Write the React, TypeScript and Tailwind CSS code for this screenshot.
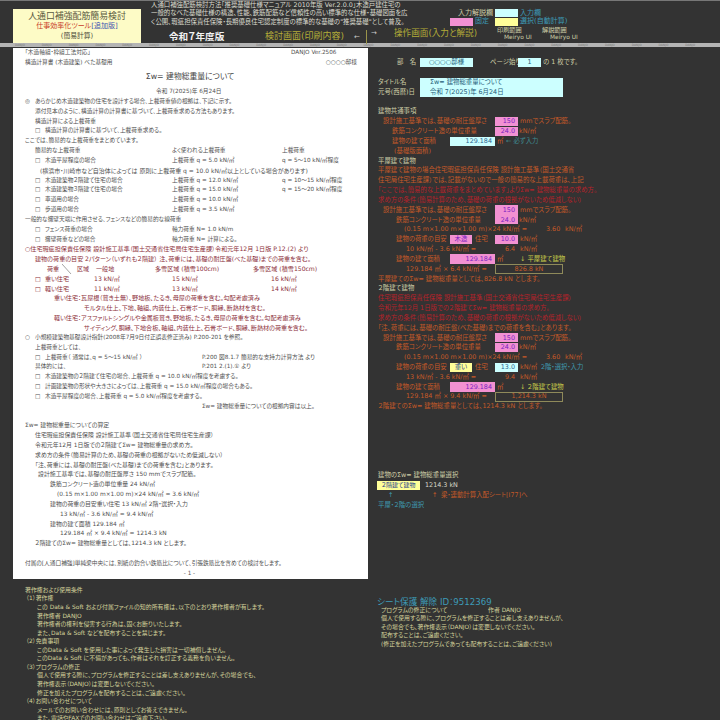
import React from "react";

const FONT = "[font-family:'DejaVu_Sans','Noto_Sans_CJK_JP',sans-serif] [font-feature-settings:'palt']";

function Row({ className = "", children }: { className?: string; children?: React.ReactNode }) {
  return <div className={"flex h-[9.83px] items-center whitespace-nowrap " + className}>{children}</div>;
}

function Check({ children }: { children?: React.ReactNode }) {
  return (
    <span className="flex">
      <span className="w-[10px]">□</span>
      <span>{children}</span>
    </span>
  );
}

function Load({ a, b, c }: { a: string; b: string; c?: string }) {
  return (
    <Row className="pl-[22px]">
      <span className="w-[137px]"><Check>{a}</Check></span>
      <span className="w-[110px]">{b}</span>
      {c && <span>{c}</span>}
    </Row>
  );
}

function Page() {
  return (
    <div className="w-[355px] ml-[13px] bg-white text-[#505050] text-[5.7px] leading-none">
      <Row className="pl-[12px]">
        <span className="w-[266px]">「木造軸組・枠組工法対応」</span>
        <span>DANJO Ver.2506</span>
      </Row>
      <Row className="pl-[12px] pr-[11px] justify-between">
        <span>構造計算書 (木造建築) べた基礎用</span>
        <span>○○○○邸様</span>
      </Row>
      <div className="flex h-[19.66px] items-center justify-center pr-[1px] text-[7.8px] text-[#444]">Σw= 建物総重量について</div>
      <Row className="pl-[143px]">令和 7(2025)年 6月24日</Row>
      <Row className="pl-[12px]"><span className="w-[10px]">◎</span>あらかじめ木造建築物の住宅を設計する場合、上載荷重値の根拠は、下記に示す。</Row>
      <Row className="pl-[22px]">添付見本のように、構造計算の計算書に基づいて、上載荷重求める方法もあります。</Row>
      <Row className="pl-[22px]">構造計算による上載荷重</Row>
      <Row className="pl-[22px]"><Check>構造計算の計算書に基づいて、上載荷重求める。</Check></Row>
      <Row className="pl-[12px]">ここでは、簡易的な上載荷重をまとめています。</Row>
      <Row className="pl-[22px]">
        <span className="w-[137px]">簡易的な上載荷重</span>
        <span className="w-[110px]">よく使われる上載荷重</span>
        <span>上載荷重</span>
      </Row>
      <Load a="木造平屋程度の場合" b="上載荷重 q =  5.0 kN/㎡" c="q =  5〜10 kN/㎡程度" />
      <Row className="pl-[27px] text-[6px]">(横浜市・川崎市など自治体によっては 原則に上載荷重 q = 10.0 kN/㎡以上としている場合があります)</Row>
      <Load a="木造建築物２階建て住宅の場合" b="上載荷重 q = 12.0 kN/㎡" c="q = 10〜15 kN/㎡程度" />
      <Load a="木造建築物３階建て住宅の場合" b="上載荷重 q = 15.0 kN/㎡" c="q = 15〜20 kN/㎡程度" />
      <Load a="車道用の場合" b="上載荷重 q = 10.0 kN/㎡" />
      <Load a="歩道用の場合" b="上載荷重 q =  3.5 kN/㎡" />
      <Row className="pl-[12px]">一般的な擁壁天端に作用させる、フェンスなどの簡易的な線荷重</Row>
      <Load a="フェンス荷重の場合" b="軸力荷重 N=  1.0 kN/m" />
      <Load a="擁壁荷重などの場合" b="軸力荷重 N=  計算による。" />

      <div className="text-[#8c2f3a] text-[6.1px]">
        <Row className="pl-[12px]">○住宅瑕疵担保責任保険 設計施工基準（国土交通省住宅局住宅生産課）令和元年12月 1日版 P.12.(2) より</Row>
        <Row className="pl-[22px]">
          <span className="w-[50px]">建物の荷重の目安</span>
          <span>2パターン（いずれも２階建） 注、荷重には、基礎の耐圧盤(べた基礎)までの荷重を含む。</span>
        </Row>
        <Row className="pl-[34px]">
          <span className="w-[15px]">荷重</span>
          <svg width="15" height="10" viewBox="0 0 15 10" className="shrink-0">
            <line x1="0" y1="0" x2="9" y2="10" stroke="#666" strokeWidth="0.6" />
          </svg>
          <span className="w-[19px]">区域</span>
          <span className="w-[59px]">一般地</span>
          <span className="w-[98px]">多雪区域 (積雪100cm)</span>
          <span>多雪区域 (積雪150cm)</span>
        </Row>
        <Row className="pl-[22px]">
          <span className="w-[59px]"><Check>重い住宅</Check></span>
          <span className="w-[78px]">13 kN/㎡</span>
          <span className="w-[99px]">15 kN/㎡</span>
          <span>16 kN/㎡</span>
        </Row>
        <Row className="pl-[22px]">
          <span className="w-[59px]"><Check>軽い住宅</Check></span>
          <span className="w-[78px]">11 kN/㎡</span>
          <span className="w-[99px]">13 kN/㎡</span>
          <span>14 kN/㎡</span>
        </Row>
        <Row className="pl-[41px]">重い住宅：瓦屋根（葺き土無）、野地板、たるき、母屋の荷重を含む。勾配考慮済み</Row>
        <Row className="pl-[71px]">モルタル仕上、下地、軸組、内装仕上、石膏ボード、胴縁、断熱材を含む。</Row>
        <Row className="pl-[41px]">軽い住宅：アスファルトシングルや金属板葺き、野地板、たるき、母屋の荷重を含む。勾配考慮済み</Row>
        <Row className="pl-[71px]">サイディング、胴縁、下地合板、軸組、内装仕上、石膏ボード、胴縁、断熱材の荷重を含む。</Row>
      </div>

      <Row className="pl-[12px]"><span className="w-[10px]">○</span>小規模建築物基礎設計指針(2008年7月9日付正誤表修正済み) P.200-201 を参照。</Row>
      <Row className="pl-[22px]">上載荷重としては、</Row>
      <Row className="pl-[22px]">
        <span className="w-[167px]"><Check>上載荷重（ 通常は、q = 5〜15 kN/㎡ ）</Check></span>
        <span>P.200 図8.1.7 簡易的な支持力計算方法 より</span>
      </Row>
      <Row className="pl-[22px]">
        <span className="w-[167px]">具体的には、</span>
        <span>P.201 2.(1).① より</span>
      </Row>
      <Row className="pl-[22px]"><Check>木造建築物の２階建て住宅の場合、上載荷重 q = 10.0 kN/㎡程度を考慮する。</Check></Row>
      <Row className="pl-[22px]"><Check>計画建築物の形状や大きさによっては、上載荷重 q = 15.0 kN/㎡程度の場合もある。</Check></Row>
      <Row className="pl-[22px]"><Check>木造平屋程度の場合、上載荷重 q = 5.0 kN/㎡程度を考慮する。</Check></Row>
      <Row className="pl-[189px]">Σw= 建物総重量についての根拠内容は以上。</Row>
      <Row />
      <div className="text-[5.9px]">
        <Row className="pl-[12px]">Σw= 建物総重量についての算定</Row>
        <Row className="pl-[22px]">住宅瑕疵担保責任保険 設計施工基準（国土交通省住宅局住宅生産課）</Row>
        <Row className="pl-[22px]">令和元年12月 1日版での２階建てΣw= 建物総重量の求め方。</Row>
        <Row className="pl-[22px]">求め方の条件（簡易計算のため、基礎の荷重の根拠がないため低減しない）</Row>
        <Row className="pl-[22px]">「注、荷重には、基礎の耐圧盤(べた基礎)までの荷重を含む」とあります。</Row>
        <Row className="pl-[25px]">設計施工基準では、基礎の耐圧盤厚さ 150 mmでスラブ配筋。</Row>
        <Row className="pl-[37px]">鉄筋コンクリート造の単位重量 24 kN/㎡</Row>
        <Row className="pl-[44px]">(0.15 m×1.00 m×1.00 m)×24 kN/㎡ = 3.6 kN/㎡</Row>
        <Row className="pl-[37px]">建物の荷重の目安重い住宅 13 kN/㎡  2階・選択・入力</Row>
        <Row className="pl-[47px]">13 kN/㎡ - 3.6 kN/㎡ = 9.4 kN/㎡</Row>
        <Row className="pl-[37px]">建物の建て面積 129.184 ㎡</Row>
        <Row className="pl-[47px]">129.184 ㎡ × 9.4 kN/㎡ = 1214.3 kN</Row>
        <Row className="pl-[22px]">２階建てのΣw= 建物総重量としては、1214.3 kN とします。</Row>
      </div>
      <Row />
      <Row className="pl-[12px]">付属の[人通口補強]単純梁中央には、別紙の釣合い鉄筋比について、引張鉄筋比を含めての検討をします。</Row>
      <Row className="justify-center pr-[2px]">- 1 -</Row>
    </div>
  );
}

function Copyright() {
  const h = "flex h-[8.57px] items-center whitespace-nowrap";
  return (
    <div className="mt-[8px] text-[#d6d49c] text-[5.9px] leading-none">
      <div className={h + " pl-[25px]"}>著作権および使用条件</div>
      <div className={h + " pl-[26px]"}>（1）著作権</div>
      <div className={h + " pl-[37px]"}>この Data &amp; Soft および付属ファイルの知的所有権は、以下のとおり著作権者が有します。</div>
      <div className={h + " pl-[37px]"}>著作権者  DANJO</div>
      <div className={h + " pl-[37px]"}>著作権者の権利を侵害する行為は、固くお断りいたします。</div>
      <div className={h + " pl-[37px]"}>また、Data &amp; Soft などを配布することを禁じます。</div>
      <div className={h + " pl-[26px]"}>（2）免責事項</div>
      <div className={h + " pl-[37px]"}>このData &amp; Soft を使用した事によって発生した損害は一切補償しません。</div>
      <div className={h + " pl-[37px]"}>このData &amp; Soft に不備があっても、作者はそれを訂正する義務を負いません。</div>
      <div className={h + " pl-[26px]"}>（3）プログラムの修正</div>
      <div className={h + " pl-[37px]"}>個人で使用する際に、プログラムを修正することは差し支えありませんが、その場合でも、</div>
      <div className={h + " pl-[37px]"}>著作権表示（DANJO）は変更しないでください。</div>
      <div className={h + " pl-[37px]"}>修正を加えたプログラムを配布することは、ご遠慮ください。</div>
      <div className={h + " pl-[26px]"}>（4）お問い合わせについて</div>
      <div className={h + " pl-[37px]"}>メールでのお問い合わせには、原則としてお答えできません。</div>
      <div className={h + " pl-[37px]"}>また、電話やFAXでのお問い合わせはご遠慮下さい。</div>
    </div>
  );
}

function Pink({ w, children, center }: { w: string; children: React.ReactNode; center?: boolean }) {
  return (
    <span className={"flex h-[9.3px] items-center bg-[#f291d2] text-[#7a22c0] text-[6.4px] shrink-0 " + w + (center ? " justify-center" : " justify-end pr-[3px]")}>
      {children}
    </span>
  );
}

function SlabRows() {
  return (
    <>
      <Row className="pl-[15px]">
        <span className="w-[112px]">設計施工基準では、基礎の耐圧盤厚さ</span>
        <Pink w="w-[23px]">150</Pink>
        <span className="ml-[2px]">mmでスラブ配筋。</span>
      </Row>
      <Row className="pl-[28px]">
        <span className="w-[99px]">鉄筋コンクリート造の単位重量</span>
        <Pink w="w-[23px]">24.0</Pink>
        <span className="ml-[1px]">kN/㎡</span>
      </Row>
      <Row className="pl-[36px]">
        <span className="w-[142px]">(0.15 m×1.00 m×1.00 m)×24 kN/㎡ =</span>
        <span className="w-[19px]">3.60</span>
        <span>kN/㎡</span>
      </Row>
    </>
  );
}

function Panel() {
  return (
    <div className="flex-1 text-[#c65a28] text-[6.4px] leading-none">
      <Row />
      <Row className="text-[#cfcfa8]">
        <span className="w-[52px] pl-[29px] shrink-0">部　名</span>
        <span className="flex h-[9.3px] w-[53px] items-center justify-center bg-[#ccffff] text-[#1f5c78]">○○○○邸様</span>
        <span className="w-[45px] pl-[17px]">ページ始り</span>
        <span className="flex h-[9.3px] w-[23px] items-center justify-center bg-[#ccffff] text-[#1f5c78]">1</span>
        <span className="ml-[2px]">の 1 枚です。</span>
      </Row>
      <Row />
      <Row className="text-[#cfcfa8]">
        <span className="w-[52px] pl-[10px] shrink-0">タイトル名</span>
        <span className="flex h-[9.3px] w-[143px] items-center bg-[#ccffff] pl-[10px] text-[#1f5c78]">Σw= 建物総重量について</span>
      </Row>
      <Row className="text-[#cfcfa8]">
        <span className="w-[52px] pl-[10px] shrink-0">元号(西暦)日</span>
        <span className="flex h-[9.3px] w-[143px] items-center bg-[#ccffff] pl-[10px] text-[#1f5c78]">令和 7(2025)年 6月24日</span>
      </Row>
      <Row />
      <Row className="pl-[10px] text-[#cfcfa8]">建物共通事項</Row>
      <Row className="pl-[15px]">
        <span className="w-[112px]">設計施工基準では、基礎の耐圧盤厚さ</span>
        <Pink w="w-[23px]">150</Pink>
        <span className="ml-[2px]">mmでスラブ配筋。</span>
      </Row>
      <Row className="pl-[24px]">
        <span className="w-[103px]">鉄筋コンクリート造の単位重量</span>
        <Pink w="w-[23px]">24.0</Pink>
        <span className="ml-[1px]">kN/㎡</span>
      </Row>
      <Row className="pl-[24px]">
        <span className="w-[58px]">建物の建て面積</span>
        <span className="flex h-[9.3px] w-[45px] items-center justify-end bg-[#ccffff] pr-[3px] text-[#2a6490]">129.184</span>
        <span className="ml-[2px] w-[9px]">㎡</span>
        <span className="text-[#3f8a90]">← 必ず入力</span>
      </Row>
      <Row className="pl-[26px]">(基礎版面積)</Row>
      <Row className="pl-[10px] text-[#cfcfa8]">平屋建て建物</Row>
      <Row className="pl-[10px]">平屋建て建物の場合住宅瑕疵担保責任保険 設計施工基準（国土交通省</Row>
      <Row className="pl-[10px]">住宅局住宅生産課）では、記載がないので一般の簡易的な上載荷重は、上記</Row>
      <Row className="pl-[10px] text-[#b8222a]">「ここでは、簡易的な上載荷重をまとめています」よりΣw= 建物総重量の求め方。</Row>
      <Row className="pl-[10px] text-[#b8222a]">求め方の条件（簡易計算のため、基礎の荷重の根拠がないため低減しない）</Row>
      <SlabRows />
      <Row className="pl-[28px]">
        <span className="w-[54px]">建物の荷重の目安</span>
        <Pink w="w-[22px]" center>木造</Pink>
        <span className="w-[23px] pl-[3px]">住宅</span>
        <Pink w="w-[23px]">10.0</Pink>
        <span className="ml-[2px]">kN/㎡</span>
      </Row>
      <Row className="pl-[38px]">
        <span className="w-[99px]">10 kN/㎡ - 3.6 kN/㎡ =</span>
        <span className="w-[15px]">6.4</span>
        <span>kN/㎡</span>
      </Row>
      <Row className="pl-[28px]">
        <span className="w-[54px]">建物の建て面積</span>
        <Pink w="w-[45px]">129.184</Pink>
        <span className="w-[25px] pl-[2px]">㎡</span>
        <span className="text-[#c8cc4a]">↓ 平屋建て建物</span>
      </Row>
      <Row className="pl-[38px]">
        <span className="w-[89px]">129.184 ㎡ × 6.4 kN/㎡ =</span>
        <span className="flex h-[9.83px] w-[68px] items-center justify-center border border-[#8f8a5a]">826.8  kN</span>
      </Row>
      <Row className="pl-[10px]">平屋建てのΣw= 建物総重量としては、826.8 kN とします。</Row>
      <Row className="pl-[10px] text-[#cfcfa8]">２階建て建物</Row>
      <Row className="pl-[10px] text-[#b8222a]">住宅瑕疵担保責任保険 設計施工基準（国土交通省住宅局住宅生産課）</Row>
      <Row className="pl-[10px] text-[#b8222a]">令和元年12月 1日版での２階建てΣw= 建物総重量の求め方。</Row>
      <Row className="pl-[10px] text-[#b8222a]">求め方の条件（簡易計算のため、基礎の荷重の根拠がないため低減しない）</Row>
      <Row className="pl-[10px]">「注、荷重には、基礎の耐圧盤(べた基礎)までの荷重を含む」とあります。</Row>
      <SlabRows />
      <Row className="pl-[28px]">
        <span className="w-[54px]">建物の荷重の目安</span>
        <span className="flex h-[9.3px] w-[22px] items-center justify-center bg-[#ffff99] text-[#1f3f8a] shrink-0">重い</span>
        <span className="w-[23px] pl-[3px]">住宅</span>
        <span className="flex h-[9.3px] w-[23px] items-center justify-end bg-[#ccffff] pr-[3px] text-[#2a6490] shrink-0">13.0</span>
        <span className="ml-[2px] w-[21px]">kN/㎡</span>
        <span className="text-[#3f9ab0]">2階・選択・入力</span>
      </Row>
      <Row className="pl-[38px]">
        <span className="w-[99px]">13 kN/㎡ - 3.6 kN/㎡ =</span>
        <span className="w-[15px]">9.4</span>
        <span>kN/㎡</span>
      </Row>
      <Row className="pl-[28px]">
        <span className="w-[54px]">建物の建て面積</span>
        <Pink w="w-[45px]">129.184</Pink>
        <span className="w-[25px] pl-[2px]">㎡</span>
        <span className="text-[#c8cc4a]">↓ ２階建て建物</span>
      </Row>
      <Row className="pl-[38px]">
        <span className="w-[89px]">129.184 ㎡ × 9.4 kN/㎡ =</span>
        <span className="flex h-[9.83px] w-[68px] items-center justify-center border border-[#8f8a5a]">1,214.3  kN</span>
      </Row>
      <Row className="pl-[10px]">２階建てのΣw= 建物総重量としては、1214.3 kN とします。</Row>
      <Row /><Row /><Row /><Row /><Row /><Row />
      <Row className="pl-[10px] text-[#cfcfa8]">建物のΣw= 建物総重量選択</Row>
      <Row className="pl-[9px] text-[#d8d8c8]">
        <span className="flex h-[9.3px] w-[43px] items-center justify-center bg-[#ffff99] text-[6px] text-[#1f3f8a]">２階建て建物</span>
        <span className="ml-[5px]">1214.3   kN</span>
      </Row>
      <Row className="pl-[20px]">
        <span className="w-[44px] text-[#3f9ab0]">↑</span>
        <span className="w-[9px]">↑</span>
        <span>梁・連動計算入配シート[I77]へ</span>
      </Row>
      <Row className="pl-[10px] text-[#3f9ab0]">平屋・２階の選択</Row>

      <div className="mt-[88px] pl-[9px] text-[8.6px] text-[#3d9bb8] h-[8.57px] flex items-center whitespace-nowrap">シート保護  解除 ID：9512369</div>
      <div className="text-[#d6d49c] text-[5.9px]">
        <div className="flex h-[8.57px] items-center whitespace-nowrap pl-[13px]">
          <span className="w-[107px]">プログラムの修正について</span>
          <span>作者 DANJO</span>
        </div>
        <div className="flex h-[8.57px] items-center whitespace-nowrap pl-[13px]">個人で使用する際に、プログラムを修正することは差し支えありませんが、</div>
        <div className="flex h-[8.57px] items-center whitespace-nowrap pl-[13px]">その場合でも、著作権表示（DANJO）は変更しないでください。</div>
        <div className="flex h-[8.57px] items-center whitespace-nowrap pl-[13px]">配布することは、ご遠慮ください。</div>
        <div className="flex h-[8.57px] items-center whitespace-nowrap pl-[13px]">(修正を加えたプログラムであっても配布することは、ご遠慮ください)</div>
      </div>
    </div>
  );
}

function Header() {
  return (
    <div className="flex h-[43px] border-t border-[#777] text-white">
      <div className="mt-[8px] ml-[13px] flex h-[34px] w-[128px] flex-col items-center bg-[#fdfbc6] pt-[3px] leading-none">
        <div className="text-[8.9px] text-[#5a5a40]">人通口補強配筋簡易検討</div>
        <div className="mt-[2px] text-[7px] text-[#c83a28]">仕事効率化ツール<span className="text-[#3a50b0]">[追加版]</span></div>
        <div className="mt-[3px] text-[6.8px] text-[#4a4a38]">(簡易計算)</div>
      </div>
      <div className="ml-[10px] w-[216px] flex-col">
        <div className="h-[8.6px] flex items-center whitespace-nowrap text-[6.4px] text-[#dcdcd0]">人通口補強配筋検討方法「推奨基礎仕様マニュアル  2010年版  Ver.2.0.0」木造戸建住宅の</div>
        <div className="h-[8.6px] flex items-center whitespace-nowrap text-[6.4px] text-[#dcdcd0]">一般的なべた基礎仕様の構造、性能、鉄筋配筋など信頼性の高い標準的な仕様・基礎図面を広</div>
        <div className="h-[8.6px] flex items-center whitespace-nowrap text-[6.4px] text-[#dcdcd0]">く公開、瑕疵担保責任保険・長期優良住宅認定制度の標準的な基礎の"推奨基礎"として普及。</div>
        <div className="mt-[3px] flex h-[14px] items-center whitespace-nowrap">
          <span className="w-[114px] pl-[18px] text-[9.6px] font-bold text-[#f2f2f2]">令和７年度版</span>
          <span className="w-[89px] text-[9px] text-[#b4ac38]">検討画面(印刷内容)</span>
          <span className="w-[12px] text-[7px] text-[#ccc]">←</span>
          <span className="h-[14px] w-[1px] bg-[#9a944a]" />
        </div>
      </div>
      <div className="flex-1 text-[#d0d0d0]">
        <div className="flex h-[26px] flex-col pt-[8px] leading-none">
          <div className="flex h-[8.6px] items-center text-[7px]">
            <span className="w-[128px] pl-[91px] whitespace-nowrap text-[#cfcfa8]">入力解説欄</span>
            <span className="h-[8.4px] w-[23px] bg-[#ccffff]" />
            <span className="ml-[2px] whitespace-nowrap text-[#3d9bb8]">入力欄</span>
          </div>
          <div className="flex h-[8.6px] items-center text-[7px]">
            <span className="ml-[83px] h-[8.4px] w-[23px] bg-[#f291d2]" />
            <span className="w-[22px] pl-[2px] whitespace-nowrap text-[#3d9bb8]">固定</span>
            <span className="h-[8.4px] w-[23px] bg-[#ffff99]" />
            <span className="ml-[2px] whitespace-nowrap text-[#3d9bb8]">選択(自動計算)</span>
          </div>
        </div>
        <div className="flex h-[14px] items-start whitespace-nowrap leading-none">
          <span className="w-[27px] pl-[4px] pt-[3px] text-[7px] text-[#ccc]">→</span>
          <span className="w-[103px] pt-[2px] text-[8.6px] text-[#b4ac38]">操作画面(入力と解説)</span>
          <span className="flex w-[45px] flex-col text-[6.2px] text-[#cfcfa8]">
            <span className="h-[8px]">印刷範囲</span>
            <span className="pl-[7px] text-[5.9px]">Meiryo UI</span>
          </span>
          <span className="flex flex-col text-[6.2px] text-[#cfcfa8]">
            <span className="h-[8px]">解説範囲</span>
            <span className="pl-[8px] text-[5.9px]">Meiryo UI</span>
          </span>
        </div>
      </div>
    </div>
  );
}

function Separator() {
  return (
    <div className="flex h-[4px] items-center gap-[17px] overflow-hidden whitespace-nowrap bg-[#b4b4b4] pl-[15px] text-[3px] leading-none text-[#777]">
      {Array.from({ length: 26 }).map((_, i) => (
        <span key={i} className="shrink-0">DANJO</span>
      ))}
    </div>
  );
}

export default function App() {
  return (
    <div className={"h-[720px] w-[720px] overflow-hidden bg-[#333333] " + FONT}>
      <Header />
      <Separator />
      <div className="flex pt-[0.8px]">
        <div className="w-[368px] shrink-0">
          <Page />
          <Copyright />
        </div>
        <Panel />
      </div>
    </div>
  );
}
